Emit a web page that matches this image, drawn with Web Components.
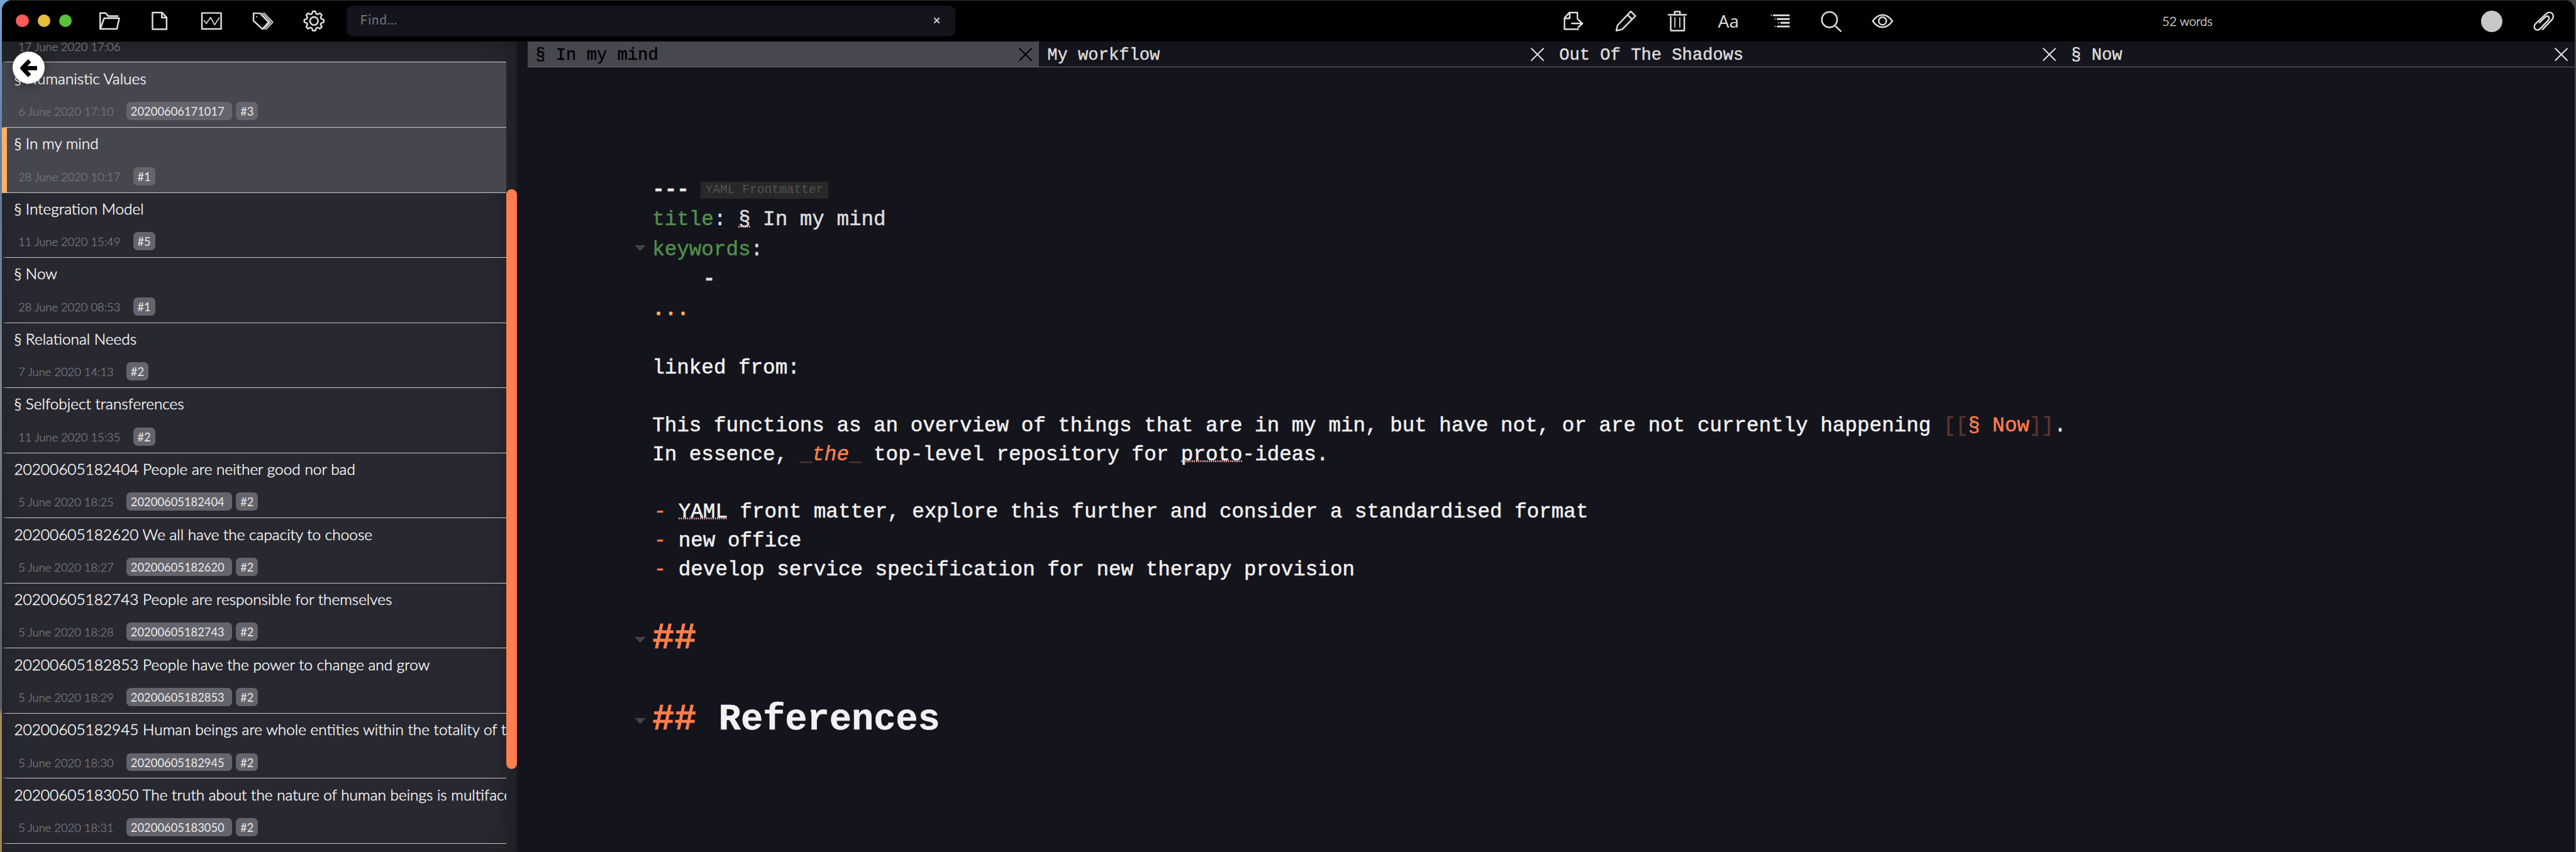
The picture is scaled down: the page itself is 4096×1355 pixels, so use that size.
<!DOCTYPE html>
<html lang="en">
<head>
<meta charset="utf-8">
<title>§ In my mind</title>
<style>
/* 1rem = 100 design pixels of a 4826px wide layout */
html { font-size: calc(100vw / 48.26); height: 100%; }
body { margin: 0; height: 100%; overflow: hidden; font-family: Lato, sans-serif; font-weight: 300; color: #fff; }
</style>
</head>
<body>
<notes-app></notes-app>
<script>
const define = (name, html, setup) => customElements.define(name, class extends HTMLElement {
  connectedCallback() {
    if (this.shadowRoot) return;
    const root = this.attachShadow({ mode: 'open' });
    const t = document.createElement('template');
    t.innerHTML = (typeof html === 'function' ? html(this) : html).trim();
    root.append(t.content.cloneNode(true));
    if (setup) setup(this, root);
  }
});

const gear = (() => {
  const pts = [];
  for (let i = 0; i < 8; i++) {
    const a = i * Math.PI / 4 - Math.PI / 2;
    const p = (r, d) => (18 + r * Math.cos(a + d)).toFixed(2) + ' ' + (18 + r * Math.sin(a + d)).toFixed(2);
    pts.push((i ? 'L' : 'M') + p(12, -.27), 'L' + p(15.3, -.13), 'L' + p(15.3, .13), 'L' + p(12, .27), 'Q' + p(10.9, .3927) + ' ' + p(12, .515));
  }
  return pts.join('') + 'Z';
})();

const icons = {
  folder: '<path d="M3.2 30.4V5.6H11.5L16 10.4H30.6"/><path d="M15 12h17" stroke-width="1" opacity=".6"/><path d="M3.4 30.4 9.4 13.8H33L29.4 30.4Z"/>',
  file: '<path d="M5.4 5H20.4L27.4 12.6V31H5.4Z"/><path d="M20 5V12.8H27.4"/>',
  stats: '<path d="M3 5.5H33V30.5H3Z"/><path d="M6.5 17.5 10 22 16.5 12.5 23 24 30 13" stroke-width="1.6"/>',
  tags: '<path d="M3 6H13.4L26.6 20 17 30.6 3 17.8Z"/><path d="M16.6 5.4 29.8 20 19.6 31M19.6 5.4 33.2 20 22.8 31" stroke-width="1.6"/><circle cx="8" cy="11.3" r="1.1" fill="currentColor" stroke="none"/>',
  gear: '<path d="' + gear + '"/><circle cx="18" cy="18" r="6.3" stroke-width="2.5"/>',
  export: '<path d="M22.8 14.7V5H10L2.6 13.4V31H24" /><path d="M10.7 5.4V14H3M14 21.9H30.4M24 15.8 30.6 21.9 24 28"/>',
  pencil: '<path d="M25.6 3 32.8 10.2 12.2 31 3 33.2 4.9 24.8Z M20.6 8.4 27.6 15.6"/>',
  trash: '<path d="M4.8 8.4H32.4M14.6 8V3.4H22.8V8M8.4 11.4V31.6Q8.4 33.2 10 33.2H28Q29.6 33.2 29.6 31.6V11.4"/><path d="M15 13V27.6M22.6 13V27.6" stroke-width="1.7"/>',
  list: '<path d="M8 9.2H32M14.2 15H32M19.8 20.9H32M14.2 26.7H32" stroke-width="2.8"/><path d="M4.3 9.2h.1M10.1 15h.1M15.9 20.9h.1M10.1 26.7h.1" stroke-width="2"/>',
  find: '<circle cx="15.7" cy="16" r="12"/><path d="M25.4 26.4 33.4 34"/>',
  eye: '<path d="M2.6 18.2C8 10.6 13 8.5 18 8.5S28 10.6 33.4 18.2C28 25.6 23 27.8 18 27.8S8 25.6 2.6 18.2Z"/><circle cx="18" cy="18.1" r="6"/>',
  clip: '<path d="M16.4 31.3 31.5 15.5C34 12.5 33.8 8 31 6 28.5 3.8 25 4.2 22.5 6.5L5.5 22.5C3 25 3 28.5 5 30.5 7.2 32.8 10.5 32.3 12.5 30.3L25.8 16.5C27.3 14.8 27 12.5 25.8 11.3 24.3 10 22.5 10.4 21 11.7L11.7 20.8"/>'
};

define('tool-icon', el => `
<style>
:host { display: flex; width: .96rem; height: .76rem; align-items: center; justify-content: center; color: #e0e0e0; flex: none; }
svg { width: .432rem; height: .432rem; fill: none; stroke: currentColor; stroke-width: 2.4; stroke-linejoin: round; stroke-linecap: round; overflow: visible; }
</style>
<svg viewBox="0 0 36 36">${icons[el.getAttribute('name')]}</svg>`);

define('search-field', `
<style>
:host { display: flex; box-sizing: border-box; width: 11.4rem; height: .58rem; border-radius: .12rem; background: #14141c; padding: 0 .28rem .02rem .25rem; align-items: center; justify-content: space-between; flex: none; font-size: .24rem; color: #77777c; font-weight: 400; }
.ph { letter-spacing: .012rem; padding-bottom: .04rem; }
svg { width: .13rem; height: .13rem; stroke: #dedede; stroke-width: 2.2; }
</style>
<span class="ph">Find…</span><svg viewBox="0 0 12 12"><path d="M1.5 1.5 10.5 10.5M10.5 1.5 1.5 10.5"/></svg>`);

define('tool-bar', `
<style>
:host { display: flex; height: .76rem; border-top: .02rem solid #333; background: #000; align-items: center; flex: none; box-sizing: content-box; }
.lights { display: flex; gap: .162rem; margin-left: .26rem; margin-right: .225rem; }
.lights i { width: .24rem; height: .24rem; border-radius: 50%; background: #fc5b57; }
.lights i:nth-child(2) { background: #e5bf3c; }
.lights i:nth-child(3) { background: #5ac23a; }
.left { display: flex; padding-right: .13rem; }
.right { display: flex; margin-left: 11.12rem; }
.aa { width: .97rem; flex: none; text-align: center; font: 500 .33rem/.76rem "Open Sans", sans-serif; color: #e0e0e0; }
.words { margin-left: 4.76rem; font-size: .234rem; color: #e6e6e6; width: .92rem; white-space: nowrap; text-align: center; -webkit-text-stroke: .004rem currentColor; }
.dot { width: .4rem; height: .4rem; border-radius: 50%; background: #c8c8c8; margin-left: 5.05rem; margin-top: .02rem; }
</style>
<div class="lights"><i></i><i></i><i></i></div>
<div class="left"><tool-icon name="folder"></tool-icon><tool-icon name="file"></tool-icon><tool-icon name="stats"></tool-icon><tool-icon name="tags"></tool-icon><tool-icon name="gear"></tool-icon></div>
<search-field></search-field>
<div class="right"><tool-icon name="export"></tool-icon><tool-icon name="pencil"></tool-icon><tool-icon name="trash"></tool-icon><span class="aa">Aa</span><tool-icon name="list"></tool-icon><tool-icon name="find"></tool-icon><tool-icon name="eye"></tool-icon></div>
<span class="words">52 words</span>
<i class="dot"></i>
<tool-icon name="clip" style="margin-left:.29rem"></tool-icon>`);

define('note-item', el => `
<style>
:host { display: block; box-sizing: border-box; height: 1.22rem; padding: .075rem 0 0 .13rem; border-left: .1rem solid transparent; border-bottom: .02rem solid #c8c8c8; overflow: hidden; flex: none; white-space: nowrap; background-clip: border-box; }
:host([selected]), :host([hovered]) { background: #46464e; }
:host([selected]) { border-left-color: #ffb066; }
.title { height: .44rem; line-height: .44rem; font-size: .2875rem; -webkit-text-stroke: .005rem currentColor; }
.meta { display: flex; height: .34rem; margin-top: .225rem; padding-left: .08rem; align-items: stretch; line-height: .355rem; font-size: .216rem; gap: .08rem; }
.date { color: #74747d; margin-right: .16rem; -webkit-text-stroke: .005rem currentColor; }
.tag { background: #64646c; border-radius: .08rem; padding: 0 .08rem; font-weight: 400; color: #e8e8e8; }
.id { padding-right: .14rem; }
</style>
<div class="title"><slot></slot></div>
<div class="meta"><span class="date">${el.getAttribute('date')}</span>${el.hasAttribute('uid') ? `<span class="tag id">${el.getAttribute('uid')}</span>` : ''}${el.hasAttribute('count') ? `<span class="tag">#${el.getAttribute('count')}</span>` : ''}</div>`);

define('note-list', `
<style>
:host { display: flex; width: 9.64rem; flex: none; background: #282830; box-shadow: inset -.14rem .06rem .5rem -.08rem rgba(20,24,24,.75); overflow: hidden; position: relative; }
.items { display: flex; flex-direction: column; width: 9.44rem; margin-top: -.82rem; flex: none; height: 17rem; }
.bar { width: .2rem; height: 10.86rem; margin-top: 2.78rem; border-radius: .1rem; background: #ff7e4d; flex: none; }
.back { position: absolute; left: .2rem; top: .2rem; width: .6rem; height: .6rem; border-radius: 50%; background: #fff; box-shadow: 0 .04rem .24rem rgba(0,0,0,.35); display: flex; align-items: center; justify-content: center; }
.back svg { width: .34rem; height: .34rem; fill: none; stroke: #000; stroke-width: 8; stroke-linejoin: round; }
</style>
<div class="items"><slot></slot></div>
<div class="bar"></div>
<div class="back"><svg viewBox="0 0 34 34"><path d="M19 3 5.5 17 19 31M6 17H33"/></svg></div>`);

define('editor-tab', `
<style>
:host { display: flex; flex: 1 1 0; box-sizing: border-box; height: .48rem; padding: 0 .13rem 0 .15rem; align-items: center; justify-content: space-between; font: 400 .32rem/.48rem "Liberation Mono", monospace; color: #dedede; -webkit-text-stroke: .005rem currentColor; }
:host([active]) { background: #47474f; color: #000; }
span { padding-top: .07rem; white-space: pre; }
svg { width: .25rem; height: .25rem; margin-top: .02rem; stroke: currentColor; stroke-width: 2.4; overflow: visible; }
</style>
<span><slot></slot></span><svg viewBox="0 0 25 25"><path d="M.8 .8 24.2 24.2M24.2 .8 .8 24.2"/></svg>`);

define('md-line', el => `
<style>
:host { display: flex; height: .54rem; line-height: .54rem; flex: none; white-space: pre; }
:host([yaml]) { height: .56rem; line-height: .56rem; color: #dedede; }
:host([heading]) { height: .98rem; line-height: .98rem; font-size: .6912rem; font-weight: 700; }
.gutter { width: .33rem; display: flex; align-items: center; flex: none; }
svg { width: .21rem; height: .11rem; fill: #444; margin-top: -.06rem; }
:host([heading]) svg { margin-top: .06rem; }
</style>
<div class="gutter">${el.hasAttribute('fold') ? '<svg viewBox="0 0 21 11"><path d="M0 0H21L10.5 11Z"/></svg>' : ''}</div><div><slot></slot></div>`);

define('md-mark', `<style>
:host { display: inline; }
:host([kind=key]) { color: #50904a; }
:host([kind=accent]) { color: #ff7e4d; }
:host([kind=em]) { color: #ff7e4d; font-style: italic; }
:host([kind=dim]) { color: #5b372f; }
:host([kind=end]) { color: #ffb066; font-weight: 700; }
:host([kind=strong]) { font-weight: 700; color: #f0f0f0; }
:host([kind=typo]) { background: linear-gradient(90deg, #f7a6a8 50%, transparent 50%) 0 .32rem / .04rem .04rem repeat-x; }
:host([kind=bullet]) { color: #ff7e4d; padding-left: .03rem; }
:host([kind=label]) { display: inline-block; vertical-align: top; margin: .12rem 0 0 .21rem; height: .32rem; line-height: .32rem; padding: 0 .095rem; background: #282828; color: #525252; font-size: .2304rem; -webkit-text-stroke: 0; }
</style><slot></slot>`);

define('md-editor', `
<style>
:host { display: flex; flex-direction: column; flex: 1; min-width: 0; background: #14141c; }
.tabs { display: flex; margin-left: .2rem; border-bottom: .02rem solid #666; flex: none; }
.page { display: flex; flex-direction: column; padding: 2.022rem 0 0 2.21rem; font: 400 .384rem "Liberation Mono", monospace; color: #f2f2f2; -webkit-text-stroke: .006rem currentColor; }
</style>
<div class="tabs"><slot name="tab"></slot></div>
<div class="page"><slot></slot></div>`);

define('notes-app', `
<style>
:host { display: block; box-sizing: border-box; height: 100vh; padding: 0 .02rem 0 .04rem; background: linear-gradient(90deg, transparent 50%, #45464a 50%) , linear-gradient(#76a3cf, #5f7ba0 20%, #7c868f 45%, #59606b 83%, #a58c60 84%, #a08455); }
.win { height: 100%; display: flex; flex-direction: column; border-radius: .2rem .2rem 0 0; overflow: hidden; background: #14141c; }
.body { display: flex; flex: 1; min-height: 0; }
</style>
<div class="win">
<tool-bar></tool-bar>
<div class="body">
<note-list>
<note-item date="17 June 2020 17:06"></note-item>
<note-item hovered date="6 June 2020 17:10" uid="20200606171017" count="3">§ Humanistic Values</note-item>
<note-item selected date="28 June 2020 10:17" count="1">§ In my mind</note-item>
<note-item date="11 June 2020 15:49" count="5">§ Integration Model</note-item>
<note-item date="28 June 2020 08:53" count="1">§ Now</note-item>
<note-item date="7 June 2020 14:13" count="2">§ Relational Needs</note-item>
<note-item date="11 June 2020 15:35" count="2">§ Selfobject transferences</note-item>
<note-item date="5 June 2020 18:25" uid="20200605182404" count="2">20200605182404 People are neither good nor bad</note-item>
<note-item date="5 June 2020 18:27" uid="20200605182620" count="2">20200605182620 We all have the capacity to choose</note-item>
<note-item date="5 June 2020 18:28" uid="20200605182743" count="2">20200605182743 People are responsible for themselves</note-item>
<note-item date="5 June 2020 18:29" uid="20200605182853" count="2">20200605182853 People have the power to change and grow</note-item>
<note-item date="5 June 2020 18:30" uid="20200605182945" count="2">20200605182945 Human beings are whole entities within the totality of t</note-item>
<note-item date="5 June 2020 18:31" uid="20200605183050" count="2">20200605183050 The truth about the nature of human beings is multiface</note-item>
</note-list>
<md-editor>
<editor-tab slot="tab" active>§ In my mind</editor-tab><editor-tab slot="tab">My workflow</editor-tab><editor-tab slot="tab">Out Of The Shadows</editor-tab><editor-tab slot="tab">§ Now</editor-tab>
<md-line yaml><md-mark kind="strong">---</md-mark><md-mark kind="label">YAML Frontmatter</md-mark></md-line>
<md-line yaml><md-mark kind="key">title</md-mark>: <md-mark kind="typo">§</md-mark> In my mind</md-line>
<md-line yaml fold><md-mark kind="key">keywords</md-mark>:</md-line>
<md-line yaml><span style="padding-left:.03rem">    <b>-</b></span></md-line>
<md-line yaml><md-mark kind="end">...</md-mark></md-line>
<md-line style="height:.55rem"></md-line>
<md-line>linked from:</md-line>
<md-line></md-line>
<md-line>This functions as an overview of things that are in my min, but have not, or are not currently happening <md-mark kind="dim">[[</md-mark><md-mark kind="accent">§ Now</md-mark><md-mark kind="dim">]]</md-mark>.</md-line>
<md-line>In essence, <md-mark kind="dim">_</md-mark><md-mark kind="em">the</md-mark><md-mark kind="dim">_</md-mark> top-level repository for <md-mark kind="typo">proto</md-mark>-ideas.</md-line>
<md-line></md-line>
<md-line><md-mark kind="bullet">- </md-mark><md-mark kind="typo">YAML</md-mark> front matter, explore this further and consider a standardised format</md-line>
<md-line><md-mark kind="bullet">- </md-mark>new office</md-line>
<md-line><md-mark kind="bullet">- </md-mark>develop service specification for new therapy provision</md-line>
<md-line style="height:.52rem"></md-line>
<md-line heading fold><md-mark kind="accent">##</md-mark></md-line>
<md-line></md-line>
<md-line heading fold><md-mark kind="accent">##</md-mark> References</md-line>
</md-editor>
</div>
</div>`);
</script>
</body>
</html>
